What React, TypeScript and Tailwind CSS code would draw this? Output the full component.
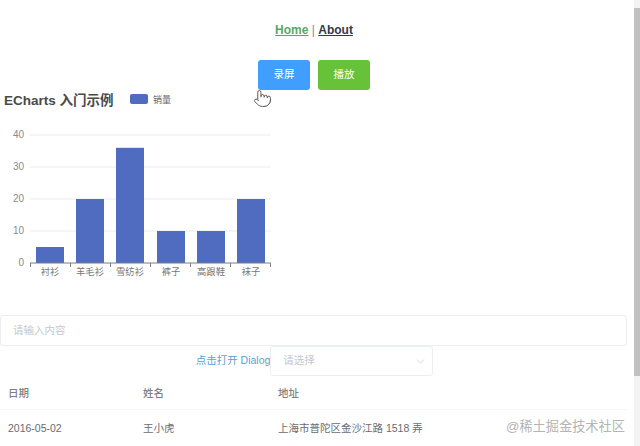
import { ChevronDown, Pointer } from "lucide-react";

const sans = "font-['Liberation_Sans','Noto_Sans_CJK_SC',sans-serif]";

const bars = [
    { name: "衬衫", value: 5, x: 36 },
    { name: "羊毛衫", value: 20, x: 76 },
    { name: "雪纺衫", value: 36, x: 116 },
    { name: "裤子", value: 10, x: 157 },
    { name: "高跟鞋", value: 10, x: 197 },
    { name: "袜子", value: 20, x: 237 },
];

// y = 175 is the zero line, each unit of value is 3.2px
const Chart = () => (
    <svg width="280" height="200" viewBox="0 0 280 200" className="block">
        <text x="4" y="17" fontSize="13.5" fontWeight="700" fill="#4a4a4a">ECharts 入门示例</text>
        <rect x="130" y="6" width="18" height="10" rx="2" fill="#4f6cc0" />
        <text x="153" y="14.5" fontSize="9" fill="#666">销量</text>
        {[0, 10, 20, 30, 40].map((tick) => (
            <g key={tick}>
                {tick > 0 && <line x1="30" x2="271" y1={175 - tick * 3.2} y2={175 - tick * 3.2} stroke="#e8ebf1" />}
                <text x="24" y={177.5 - tick * 3.2} fontSize="10" textAnchor="end" fill="#8a8a8a">{tick}</text>
            </g>
        ))}
        {bars.map((bar) => (
            <g key={bar.name}>
                <rect x={bar.x} y={175 - bar.value * 3.2} width="28" height={bar.value * 3.2} fill="#4f6cc0" />
                <text x={bar.x + 14} y="186.5" fontSize="9.3" textAnchor="middle" fill="#777">{bar.name}</text>
            </g>
        ))}
        <line x1="30" x2="271" y1="175" y2="175" stroke="#7b7d85" />
        {[30.5, 70.5, 110.5, 150.5, 190.5, 230.5, 270.5].map((x) => (
            <line key={x} x1={x} x2={x} y1="175" y2="179" stroke="#7b7d85" />
        ))}
    </svg>
);

const App = () => {
    return (
        <div className={`relative flex h-[446px] w-[640px] overflow-hidden bg-white ${sans}`}>
            <div className="w-[634px] shrink-0">
                <div className="w-[628px] text-center">
                    <div className="pt-[22px] text-[12px] leading-[16px] text-[#2c3e50]">
                        <a className="font-bold text-[#55a868] underline">Home</a>
                        <span className="text-[#888]"> | </span>
                        <a className="font-bold text-[#333a45] underline">About</a>
                    </div>
                    <div className="mt-[22px] flex justify-center gap-2">
                        <button className="h-[30px] w-[52px] rounded-[3px] bg-[#409eff] text-[10.5px] text-white">录屏</button>
                        <button className="h-[30px] w-[52px] rounded-[3px] bg-[#67c23a] text-[10.5px] text-white">播放</button>
                    </div>
                </div>

                <div className="-mt-[2px]">
                    <Chart />
                </div>

                <div className="mt-[27px] w-[627px]">
                    <div className="flex h-[31px] items-center rounded-[3px] border border-[#eceef2] px-3 text-[10.5px] text-[#c4c7ce]">请输入内容</div>
                    <div className="flex items-center justify-center pl-[2px]">
                        <a className="text-[10.5px] text-[#5a9fd4]">点击打开 Dialog</a>
                        <div className="flex h-[30px] w-[163px] items-center justify-between rounded-[3px] border border-[#eceef2] pl-3 pr-[5px] text-[10.5px] text-[#c4c7ce]">
                            <span>请选择</span>
                            <ChevronDown size={13} strokeWidth={1.25} color="#c4c7ce" />
                        </div>
                    </div>
                </div>

                <div className="w-[627px] text-[10.5px] text-[#6a6c70]">
                    <div className="grid h-[34px] grid-cols-[135px_135px_1fr] items-center border-b border-[#f5f6f8] pl-2 pt-[2px] font-medium text-[#808080]">
                        <div>日期</div>
                        <div>姓名</div>
                        <div>地址</div>
                    </div>
                    <div className="grid h-[37px] grid-cols-[135px_135px_1fr] items-center pl-2">
                        <div>2016-05-02</div>
                        <div>王小虎</div>
                        <div>上海市普陀区金沙江路 1518 弄</div>
                    </div>
                </div>
            </div>

            <div className="flex w-[6px] shrink-0 flex-col bg-[#f3f3f3] pt-[8px]">
                <div className="h-[368px] bg-[#c1c1c1]" />
            </div>

            <Pointer size={19} strokeWidth={1.1} color="#444" fill="#fff" className="absolute left-[253px] top-[89px]" />
            <div className="absolute left-[506px] top-[417px] text-[13.2px] text-[#b4b4b4]">@稀土掘金技术社区</div>
        </div>
    );
};

export default App;
